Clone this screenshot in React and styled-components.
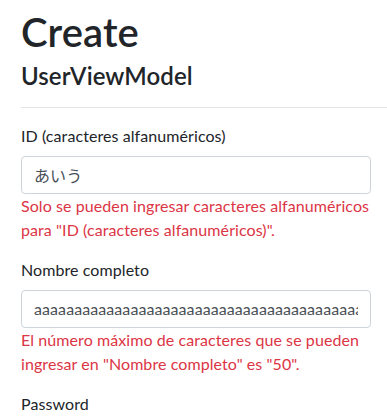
import React from 'react'
import styled, { createGlobalStyle } from 'styled-components'

const GlobalStyle = createGlobalStyle`
  body {
    margin: 0;
    font-family: Lato, "Noto Sans CJK JP", sans-serif;
    font-size: 16px;
    line-height: 1.5;
    letter-spacing: 0.08px;
    color: #212529;
    background: #fff;
  }
`

const Page = styled.div`
  padding: 0 0 0 21px;
  overflow: hidden;
`

const Title = styled.h1`
  margin: 8px 0 6px;
  font-size: 40px;
  font-weight: 600;
  line-height: 1.2;
`

const Subtitle = styled.h4`
  margin: 0 0 7px;
  font-size: 24px;
  font-weight: 600;
  line-height: 1.2;
`

const Rule = styled.hr`
  margin: 16px 0;
  border: 0;
  border-top: 1px solid rgba(0, 0, 0, 0.1);
`

const Form = styled.form`
  width: 350px;
`

const Group = styled.div`
  margin-bottom: 16px;
`

const Label = styled.label`
  display: block;
  margin-bottom: 8px;
`

const Input = styled.input`
  display: block;
  box-sizing: border-box;
  width: 100%;
  height: 38px;
  padding: 6px 12px;
  font: inherit;
  letter-spacing: inherit;
  color: #495057;
  background: #fff;
  border: 1px solid #ced4da;
  border-radius: 4px;
  outline: none;
`

const Error = styled.span`
  display: block;
  color: #dc3545;
`

const fields = [
  {
    label: 'ID (caracteres alfanuméricos)',
    value: 'あいう',
    error: 'Solo se pueden ingresar caracteres alfanuméricos para "ID (caracteres alfanuméricos)".',
  },
  {
    label: 'Nombre completo',
    value: 'a'.repeat(50),
    error: 'El número máximo de caracteres que se pueden ingresar en "Nombre completo" es "50".',
  },
  { label: 'Password', value: '', type: 'password' },
]

export default function App() {
  return (
    <Page>
      <GlobalStyle />
      <Title>Create</Title>
      <Subtitle>UserViewModel</Subtitle>
      <Rule />
      <Form onSubmit={(e) => e.preventDefault()}>
        {fields.map((f) => (
          <Group key={f.label}>
            <Label>{f.label}</Label>
            <Input type={f.type || 'text'} defaultValue={f.value} />
            {f.error && <Error>{f.error}</Error>}
          </Group>
        ))}
      </Form>
    </Page>
  )
}
